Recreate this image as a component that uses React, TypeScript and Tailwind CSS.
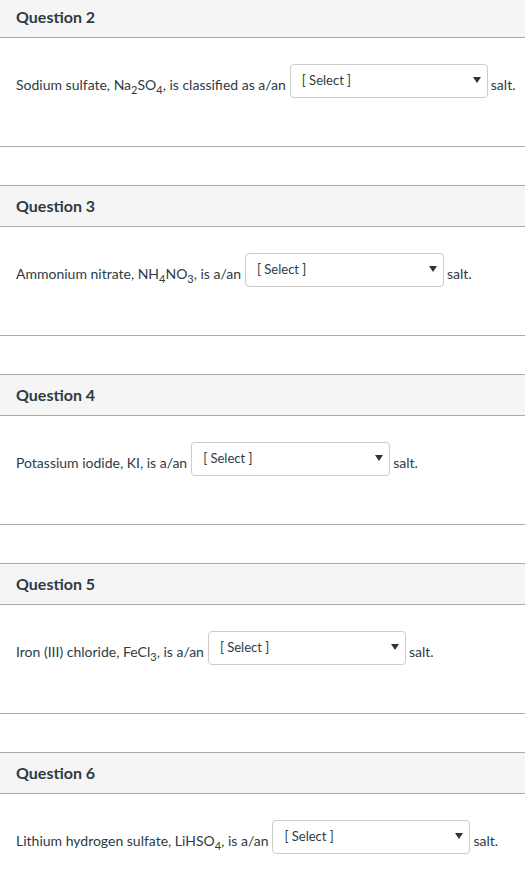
import React from "react";

type Q = { n: number; label: React.ReactNode; width: number };

const Sub = ({ children }: { children: React.ReactNode }) => (
  <span className="text-[11px] leading-none relative top-[4px]">{children}</span>
);

const questions: Q[] = [
  { n: 2, label: <>Sodium sulfate, Na<Sub>2</Sub>SO<Sub>4</Sub>, is classified as a/an</>, width: 198 },
  { n: 3, label: <>Ammonium nitrate, NH<Sub>4</Sub>NO<Sub>3</Sub>, is a/an</>, width: 199 },
  { n: 4, label: <>Potassium iodide, KI, is a/an</>, width: 199 },
  { n: 5, label: <>Iron (III) chloride, FeCl<Sub>3</Sub>, is a/an</>, width: 198 },
  { n: 6, label: <>Lithium hydrogen sulfate, LiHSO<Sub>4</Sub>, is a/an</>, width: 198 },
];

export default function App() {
  return (
    <div
      className="w-[525px] h-[889px] overflow-hidden bg-white text-[#2d3b45]"
      style={{ fontFamily: "Lato, 'Open Sans', sans-serif" }}
    >
      <div className="-mt-[4px] flex flex-col gap-[38px]">
        {questions.map((q) => (
          <div key={q.n} className="border-y border-[#aaaaaa]">
            <div className="h-[41px] bg-[#f5f5f5] border-b border-[#aaaaaa] px-4 flex items-center">
              <span className="font-bold text-[16px]">Question {q.n}</span>
            </div>
            <div className="h-[108px] px-4 pt-[26px]">
              <div className="flex items-start">
                <span className="shrink-0 text-[14px] mt-[10px] whitespace-nowrap">{q.label}</span>
                <div
                  className="shrink-0 ml-[4px] h-[34px] border border-[#cccccc] rounded-[4px] bg-white flex items-center justify-between pl-[11px] pr-[6px]"
                  style={{ width: q.width }}
                >
                  <span className="text-[13px] text-[#2d3b45] -mt-[1px]">[ Select ]</span>
                  <span className="w-0 h-0 border-l-[4px] border-r-[4px] border-t-[6px] border-l-transparent border-r-transparent border-t-[#333333] -mt-[2px]"></span>
                </div>
                <span className="shrink-0 text-[14px] mt-[10px] ml-[3px] whitespace-nowrap">salt.</span>
              </div>
            </div>
          </div>
        ))}
      </div>
    </div>
  );
}
